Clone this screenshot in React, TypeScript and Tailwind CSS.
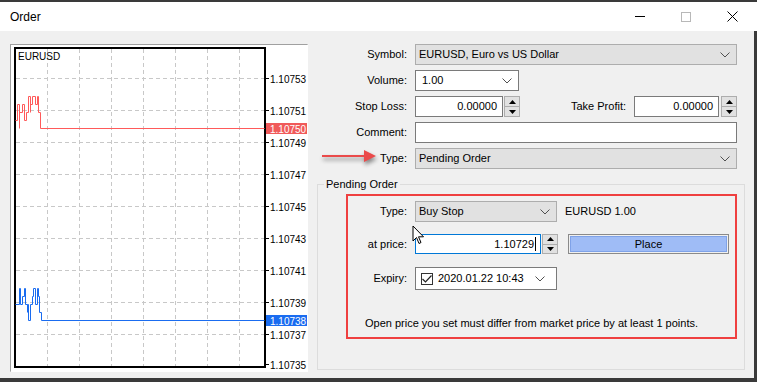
import React from "react";

const font = { fontFamily: '"Liberation Sans", Arial, sans-serif' };

function Chevron() {
  return (
    <svg width="10" height="6" viewBox="0 0 10 6" className="shrink-0">
      <polyline points="0.5,0.5 5,5 9.5,0.5" fill="none" stroke="#505050" strokeWidth="1" />
    </svg>
  );
}

function Spinner({ h = 21 }: { h?: number }) {
  return (
    <div
      className="w-[16px] border border-[#adadad] bg-[#e1e1e1] flex flex-col shrink-0"
      style={{ height: h }}
    >
      <div className="flex-1 flex items-center justify-center border-b border-[#adadad]">
        <svg width="7" height="4" viewBox="0 0 7 4">
          <polygon points="3.5,0 7,4 0,4" fill="#000" />
        </svg>
      </div>
      <div className="flex-1 flex items-center justify-center">
        <svg width="7" height="4" viewBox="0 0 7 4">
          <polygon points="0,0 7,0 3.5,4" fill="#000" />
        </svg>
      </div>
    </div>
  );
}

function Label({ children, w }: { children: React.ReactNode; w: number }) {
  return (
    <div className="text-right shrink-0 pr-[8px]" style={{ width: w }}>
      {children}
    </div>
  );
}

function Chart() {
  const gx = [36, 68, 100, 132, 164, 196, 228];
  const gy = [33, 65, 97, 129, 161, 193, 225, 257, 289];
  const labels: [string, number][] = [
    ["1.10753", 33],
    ["1.10751", 65],
    ["1.10749", 97],
    ["1.10747", 129],
    ["1.10745", 161],
    ["1.10743", 193],
    ["1.10741", 225],
    ["1.10739", 257],
    ["1.10737", 289],
    ["1.10735", 319],
  ];
  const red =
    "M4,75 H6 V59 H8 V83 M8,67 H11 V59 H13 V75 H15 V67 H17 V51 H19 V67 M19,59 H21 V51 H24 V59 H26 V51 H27 V67 H29 V83 H253";
  const blue =
    "M4,259 H8 V243 H9 V259 H11 V251 H13 V243 H14 V259 H16 V267 M16,259 H17 V275 H19 V259 H21 V251 H22 V243 H24 V259 H26 V243 H27 V251 H28 V267 H30 V275 H253";
  return (
    <svg width="297" height="327" viewBox="0 0 297 327" className="block bg-white" style={font}>
      {gx.map((x) => (
        <line key={x} x1={x + 0.5} y1={4} x2={x + 0.5} y2={321} stroke="#c8c8c8" strokeDasharray="4 3" />
      ))}
      {gy.map((y) => (
        <line key={y} x1={5} y1={y + 0.5} x2={253} y2={y + 0.5} stroke="#c8c8c8" strokeDasharray="4 3" />
      ))}
      <rect x={4} y={3} width={250} height={319} fill="none" stroke="#000" strokeWidth="2" />
      <text x={7} y={15} fontSize="10" fill="#000">EURUSD</text>
      <path d={red} transform="translate(0.5,0.5)" fill="none" stroke="#ff5a5a" strokeWidth="1" />
      <path d={blue} transform="translate(0.5,0.5)" fill="none" stroke="#1a6cf0" strokeWidth="1" />
      {labels.map(([t, y]) => (
        <g key={t}>
          <line x1={255} y1={y + 0.5} x2={258} y2={y + 0.5} stroke="#000" />
          <text x={259} y={y + 4.5} fontSize="10" fill="#000">{t}</text>
        </g>
      ))}
      <rect x={255} y={78} width={41} height={11} fill="#f05a5a" />
      <text x={259} y={87.5} fontSize="10" fill="#fff">1.10750</text>
      <rect x={255} y={270} width={41} height={11} fill="#1a6cf0" />
      <text x={259} y={279.5} fontSize="10" fill="#fff">1.10738</text>
    </svg>
  );
}

export default function App() {
  return (
    <div className="w-[757px] h-[382px] bg-[#3a3a3a] relative overflow-hidden text-[11px] text-black" style={font}>
      <div className="h-[2px]" />
      {/* Title bar */}
      <div className="h-[29px] bg-white flex items-center">
        <div className="pl-[10px] text-[12px] flex-1">Order</div>
        <div className="w-[46px] h-[29px] flex items-center justify-center">
          <div className="w-[10px] h-[1px] bg-black" />
        </div>
        <div className="w-[46px] h-[29px] flex items-center justify-center">
          <div className="w-[10px] h-[10px] border border-[#b8b8b8]" />
        </div>
        <div className="w-[46px] h-[29px] flex items-center justify-center mr-[2px]">
          <svg width="11" height="11" viewBox="0 0 11 11">
            <path d="M0.5,0.5 L10.5,10.5 M10.5,0.5 L0.5,10.5" stroke="#000" strokeWidth="1" />
          </svg>
        </div>
      </div>
      {/* Body */}
      <div className="w-[754px] h-[347px] bg-[#f0f0f0] flex pt-[13px] pl-[10px]">
        <div className="w-[298px] h-[328px] border-t border-l border-[#a0a0a0] border-r border-r-[#e3e3e3] border-b border-b-[#e3e3e3]">
          <Chart />
        </div>
        <div className="flex flex-col ml-[8px] w-[429px]">
          <div className="flex flex-col gap-[5px]">
            <div className="flex items-center h-[21px]">
              <Label w={99}>Symbol:</Label>
              <div className="w-[322px] h-[21px] bg-[#e1e1e1] border border-[#adadad] flex items-center pl-[3px] pr-[6px]">
                <span className="flex-1">EURUSD, Euro vs US Dollar</span>
                <Chevron />
              </div>
            </div>
            <div className="flex items-center h-[21px]">
              <Label w={99}>Volume:</Label>
              <div className="w-[104px] h-[21px] bg-white border border-[#7a7a7a] flex items-center pl-[6px] pr-[6px]">
                <span className="flex-1">1.00</span>
                <Chevron />
              </div>
            </div>
            <div className="flex items-center h-[21px]">
              <Label w={99}>Stop Loss:</Label>
              <div className="w-[88px] h-[21px] bg-white border border-[#7a7a7a] flex items-center justify-end pr-[5px]">
                0.00000
              </div>
              <div className="ml-[1px]">
                <Spinner />
              </div>
              <div className="w-[114px] text-right pr-[8px]">Take Profit:</div>
              <div className="w-[85px] h-[21px] bg-white border border-[#7a7a7a] flex items-center justify-end pr-[5px]">
                0.00000
              </div>
              <div className="ml-[2px]">
                <Spinner />
              </div>
            </div>
            <div className="flex items-center h-[21px]">
              <Label w={99}>Comment:</Label>
              <div className="w-[322px] h-[21px] bg-white border border-[#7a7a7a]" />
            </div>
            <div className="flex items-center h-[21px]">
              <Label w={99}>Type:</Label>
              <div className="w-[322px] h-[21px] bg-[#e1e1e1] border border-[#adadad] flex items-center pl-[3px] pr-[6px]">
                <span className="flex-1">Pending Order</span>
                <Chevron />
              </div>
            </div>
          </div>
          <fieldset className="mt-[7px] ml-[1px] w-[428px] border border-[#dcdcdc] pb-[30px]">
            <legend className="ml-[6px] px-[2px] leading-[16px]">Pending Order</legend>
            <div className="ml-[28px] mt-[2px] w-[391px] h-[145px] border-2 border-[#ef4040] flex flex-col">
              <div className="flex items-center h-[21px] mt-[5px]">
                <Label w={67}>Type:</Label>
                <div className="w-[142px] h-[21px] bg-[#e1e1e1] border border-[#adadad] flex items-center pl-[3px] pr-[6px]">
                  <span className="flex-1">Buy Stop</span>
                  <Chevron />
                </div>
                <span className="ml-[8px]">EURUSD 1.00</span>
              </div>
              <div className="flex items-center h-[20px] mt-[12px]">
                <Label w={67}>at price:</Label>
                <div className="w-[126px] h-[20px] bg-white border border-[#0078d7] flex items-center justify-end pr-[4px]">
                  1.10729
                  <span className="w-[1px] h-[14px] bg-black ml-[1px]" />
                </div>
                <div className="ml-[1px]">
                  <Spinner h={20} />
                </div>
                <div className="ml-[10px] w-[161px] h-[20px] border border-[#8a8a8a] p-[1px]">
                  <div className="w-full h-full bg-[#9fbcf6] border border-[#7fa2e8] flex items-center justify-center">
                    Place
                  </div>
                </div>
              </div>
              <div className="flex items-center h-[23px] mt-[13px]">
                <Label w={67}>Expiry:</Label>
                <div className="w-[142px] h-[23px] bg-white border border-[#7a7a7a] flex items-center pl-[5px] pr-[11px]">
                  <div className="w-[12px] h-[12px] border border-[#333] flex items-center justify-center shrink-0">
                    <svg width="10" height="8" viewBox="0 0 10 8">
                      <polyline points="0.5,4 3.5,7 9.5,0.5" fill="none" stroke="#222" strokeWidth="1.2" />
                    </svg>
                  </div>
                  <span className="ml-[5px] whitespace-nowrap">2020.01.22 10:43</span>
                  <span className="flex-1" />
                  <Chevron />
                </div>
              </div>
              <div className="ml-[17px] mt-[25px]">
                Open price you set must differ from market price by at least 1 points.
              </div>
            </div>
          </fieldset>
        </div>
      </div>
      {/* Annotation arrow */}
      <svg
        width="60"
        height="20"
        viewBox="0 0 60 20"
        className="absolute left-[320px] top-[146px] drop-shadow-[1px_3px_2px_rgba(0,0,0,0.45)]"
      >
        <path d="M2,9 L44,9 L44,4 L56,10 L44,16 L44,11 L2,11 Z" fill="#ea4a4a" />
      </svg>
      {/* Mouse cursor */}
      <svg width="14" height="20" viewBox="0 0 14 20" className="absolute left-[412px] top-[225px]">
        <path d="M1,1 L1,16 L4.5,12.5 L7,18.5 L9,17.5 L6.5,11.8 L11.5,11.8 Z" fill="#fff" stroke="#000" strokeWidth="1" strokeLinejoin="round" />
      </svg>
    </div>
  );
}
